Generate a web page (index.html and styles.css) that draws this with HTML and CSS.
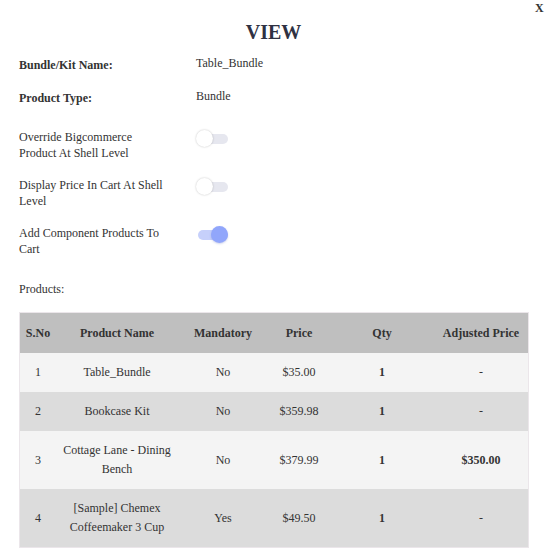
FILE: index.html
```html
<!DOCTYPE html>
<html lang="en">
<head>
  <meta charset="UTF-8">
  <title>View Bundle</title>
  <link rel="stylesheet" href="styles.css">
</head>
<body>
  <div class="modal">
    <div class="close-row"><span class="close">X</span></div>
    <h2 class="title">VIEW</h2>

    <div class="fields">
      <div class="field-row">
        <span class="label">Bundle/Kit Name:</span>
        <span class="value">Table_Bundle</span>
      </div>
      <div class="field-row">
        <span class="label">Product Type:</span>
        <span class="value">Bundle</span>
      </div>
    </div>

    <div class="toggles">
      <div class="toggle-row">
        <span class="toggle-label">Override Bigcommerce Product At Shell Level</span>
        <span class="switch"><span class="knob"></span></span>
      </div>
      <div class="toggle-row">
        <span class="toggle-label">Display Price In Cart At Shell Level</span>
        <span class="switch"><span class="knob"></span></span>
      </div>
      <div class="toggle-row">
        <span class="toggle-label">Add Component Products To Cart</span>
        <span class="switch on"><span class="knob"></span></span>
      </div>
    </div>

    <p class="products-label">Products:</p>

    <table class="products">
      <thead>
        <tr>
          <th class="c-no">S.No</th>
          <th class="c-name">Product Name</th>
          <th class="c-mand">Mandatory</th>
          <th class="c-price">Price</th>
          <th class="c-qty">Qty</th>
          <th class="c-adj">Adjusted Price</th>
        </tr>
      </thead>
      <tbody>
        <tr>
          <td>1</td>
          <td>Table_Bundle</td>
          <td>No</td>
          <td>$35.00</td>
          <td class="bold">1</td>
          <td>-</td>
        </tr>
        <tr>
          <td>2</td>
          <td>Bookcase Kit</td>
          <td>No</td>
          <td>$359.98</td>
          <td class="bold">1</td>
          <td>-</td>
        </tr>
        <tr>
          <td>3</td>
          <td>Cottage Lane - Dining Bench</td>
          <td>No</td>
          <td>$379.99</td>
          <td class="bold">1</td>
          <td class="bold">$350.00</td>
        </tr>
        <tr>
          <td>4</td>
          <td>[Sample] Chemex Coffeemaker 3 Cup</td>
          <td>Yes</td>
          <td>$49.50</td>
          <td class="bold">1</td>
          <td>-</td>
        </tr>
      </tbody>
    </table>
  </div>
</body>
</html>
```

FILE: styles.css
```css
body {
  margin: 0;
  background-color: #ffffff;
  font-family: 'Liberation Serif', 'Times New Roman', serif;
  font-size: 12px;
  color: #333;
}

.modal {
  padding: 0 19px;
}

.close-row {
  display: flex;
  justify-content: flex-end;
  height: 16px;
  margin-right: -17px;
}

.close {
  font-weight: bold;
  font-size: 12px;
  padding: 1px 0 0;
  width: 10px;
}

.title {
  text-align: center;
  font-size: 20px;
  font-weight: bold;
  color: #2f3142;
  margin: 4px 0 0;
  line-height: 24px;
}

.fields {
  margin-top: 11px;
}

.field-row {
  display: grid;
  grid-template-columns: 177px 1fr;
  height: 33px;
  align-items: start;
}

.label {
  font-weight: bold;
  padding-top: 3px;
}

.value {
  padding-top: 1px;
}

.toggles {
  margin-top: 8px;
}

.toggle-row {
  display: grid;
  grid-template-columns: 177px 1fr;
  line-height: 16px;
  height: 48px;
}

.toggle-label {
  width: 150px;
}

.switch {
  position: relative;
  display: block;
  width: 30px;
  height: 10px;
  margin-top: 5px;
  margin-left: 2px;
  border-radius: 5px;
  background-color: #e6e7ef;
}

.knob {
  position: absolute;
  top: -4px;
  left: -2px;
  width: 17px;
  height: 17px;
  border-radius: 50%;
  background-color: #ffffff;
  box-shadow: 0 0 2px rgba(0, 0, 0, 0.25);
}

.switch.on {
  background-color: #c6d0fb;
}

.switch.on .knob {
  left: 13px;
  background-color: #91a6fb;
  box-shadow: 0 1px 2px rgba(60, 80, 180, 0.25);
}

.products-label {
  margin: 9px 0 15px;
}

.products {
  width: 510px;
  border-collapse: collapse;
  border: 1px solid #ebe6ea;
  table-layout: fixed;
  color: #333;
}

.products th {
  background-color: #bfbfbf;
  height: 40px;
  font-weight: bold;
  color: #333;
  padding: 0;
  text-align: center;
}

.products td {
  text-align: center;
  padding: 10px 6px;
  line-height: 19px;
}

.products tbody tr:nth-child(odd) {
  background-color: #f4f4f4;
}

.products tbody tr:nth-child(even) {
  background-color: #dcdcdc;
}

.c-no { width: 36px; }
.c-name { width: 122px; }
.c-mand { width: 90px; }
.c-price { width: 62px; }
.c-qty { width: 104px; }
.c-adj { width: auto; }

.bold {
  font-weight: bold;
}
```
